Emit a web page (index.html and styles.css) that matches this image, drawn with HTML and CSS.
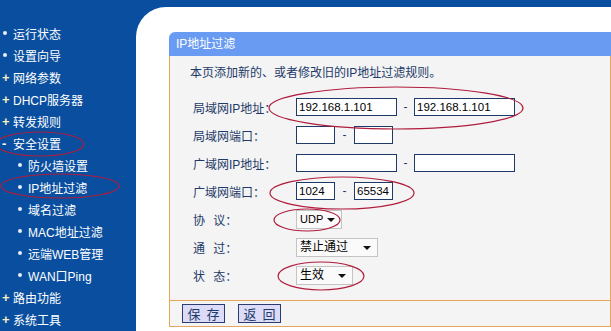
FILE: index.html
```html
<!DOCTYPE html>
<html lang="zh-CN">
<head>
  <meta charset="UTF-8">
  <title>IP地址过滤</title>
  <link rel="stylesheet" href="styles.css">
</head>
<body>
  <div class="page">
    <!-- Left menu -->
    <ul class="menu">
      <li class="item"><span class="mark dot"></span>运行状态</li>
      <li class="item"><span class="mark dot"></span>设置向导</li>
      <li class="item"><span class="mark plus">+</span>网络参数</li>
      <li class="item"><span class="mark plus">+</span>DHCP服务器</li>
      <li class="item"><span class="mark plus">+</span>转发规则</li>
      <li class="item"><span class="mark minus">-</span>安全设置</li>
      <li class="item sub"><span class="mark dot"></span>防火墙设置</li>
      <li class="item sub"><span class="mark dot"></span>IP地址过滤</li>
      <li class="item sub"><span class="mark dot"></span>域名过滤</li>
      <li class="item sub"><span class="mark dot"></span>MAC地址过滤</li>
      <li class="item sub"><span class="mark dot"></span>远端WEB管理</li>
      <li class="item sub"><span class="mark dot"></span>WAN口Ping</li>
      <li class="item"><span class="mark plus">+</span>路由功能</li>
      <li class="item"><span class="mark plus">+</span>系统工具</li>
    </ul>

    <!-- Main area -->
    <div class="main">
      <div class="panel">
        <div class="panel-title">IP地址过滤</div>
        <div class="panel-body">
          <p class="intro">本页添加新的、或者修改旧的IP地址过滤规则。</p>

          <div class="row">
            <span class="label">局域网IP地址：</span>
            <span class="input wide">192.168.1.101</span>
            <span class="dash">-</span>
            <span class="input wide">192.168.1.101</span>
          </div>
          <div class="row">
            <span class="label">局域网端口：</span>
            <span class="input port"></span>
            <span class="dash dash-port">-</span>
            <span class="input port"></span>
          </div>
          <div class="row">
            <span class="label">广域网IP地址：</span>
            <span class="input wide"></span>
            <span class="dash">-</span>
            <span class="input wide"></span>
          </div>
          <div class="row">
            <span class="label">广域网端口：</span>
            <span class="input port">1024</span>
            <span class="dash dash-port">-</span>
            <span class="input port">65534</span>
          </div>
          <div class="row">
            <span class="label spaced">协 议：</span>
            <span class="select sel-proto">UDP<span class="arrow"></span></span>
          </div>
          <div class="row">
            <span class="label spaced">通 过：</span>
            <span class="select sel-pass">禁止通过<span class="arrow"></span></span>
          </div>
          <div class="row">
            <span class="label spaced">状 态：</span>
            <span class="select sel-state">生效<span class="arrow"></span></span>
          </div>
        </div>
        <div class="panel-foot">
          <button class="btn">保 存</button>
          <button class="btn">返 回</button>
        </div>
      </div>
    </div>
  </div>

  <!-- Red annotation circles drawn over the page -->
  <svg class="marks" width="611" height="331" viewBox="0 0 611 331">
    <ellipse cx="40" cy="144" rx="44" ry="12"/>
    <ellipse cx="60" cy="186" rx="59" ry="12"/>
    <ellipse cx="396" cy="108" rx="127" ry="21"/>
    <ellipse cx="342" cy="193" rx="72" ry="16"/>
    <ellipse cx="307" cy="220" rx="33" ry="11"/>
    <ellipse cx="321" cy="276" rx="43" ry="14"/>
  </svg>
</body>
</html>
```

FILE: styles.css
```css
/* Page and blue frame */
body {
  margin: 0;
  background-color: #0a4f9f;
  font-family: "Liberation Sans", "Noto Sans CJK SC", sans-serif;
  font-size: 12px;
  position: relative;
  overflow: hidden;
  height: 331px;
}
.page {
  display: flex;
  height: 331px;
}
/* Left menu */
.menu {
  list-style: none;
  margin: 0;
  padding: 22px 0 0 0;
  width: 136px;
  flex-shrink: 0;
  color: #ffffff;
}
.item {
  display: flex;
  align-items: center;
  height: 22px;
  padding-left: 2px;
}
.item.sub {
  padding-left: 17px;
}
.mark {
  width: 11px;
  display: inline-flex;
  align-items: center;
  justify-content: flex-start;
  font-weight: bold;
  color: #f4f0c0;
}
.mark.dot::before {
  content: "";
  width: 4px;
  height: 4px;
  margin-left: 1px;
  border-radius: 50%;
  background-color: #e8ecf4;
}
.mark.plus {
  font-size: 13px;
}
.mark.minus {
  font-size: 13px;
  color: #ffffff;
}
/* Main white area */
.main {
  flex: 1;
  margin-top: 7px;
  background-color: #ffffff;
  border-top-left-radius: 30px;
  padding: 25px 0 0 33px;
}
.panel {
  display: flex;
  flex-direction: column;
}
.panel-title {
  height: 24px;
  line-height: 24px;
  background-color: #6a9bf2;
  color: #ffffff;
  padding-left: 7px;
  border-top-left-radius: 6px;
}
.panel-body {
  background-color: #f4f4f4;
  border-left: 1px solid #e6a65e;
  border-right: 1px solid #e6a65e;
  padding: 8px 0 11px 20px;
  color: #1d3a68;
}
.intro {
  margin: 0 0 11px;
  line-height: 18px;
}
.row {
  display: flex;
  align-items: center;
  height: 28px;
  padding-left: 3px;
}
.label {
  width: 103px;
  flex-shrink: 0;
}
.label.spaced {
  white-space: pre;
  word-spacing: 5px;
}
.input {
  height: 16px;
  line-height: 16px;
  border: 1px solid #1d3a68;
  background-color: #ffffff;
  color: #000000;
  padding-left: 2px;
  box-sizing: content-box;
  font-size: 11.5px;
}
.input.wide {
  width: 97px;
}
.input.port {
  width: 35px;
}
.dash {
  width: 17px;
  text-align: center;
}
.dash.dash-port {
  width: 19px;
}
/* Drop-down boxes */
.select {
  position: relative;
  height: 17px;
  line-height: 17px;
  border: 1px solid #c4c4c4;
  background-color: #fafafa;
  color: #000000;
  padding-left: 3px;
}
.sel-proto {
  width: 41px;
  font-size: 11px;
}
.sel-pass {
  width: 77px;
}
.sel-state {
  width: 52px;
}
.arrow {
  position: absolute;
  right: 6px;
  top: 7px;
  border-left: 4px solid transparent;
  border-right: 4px solid transparent;
  border-top: 4px solid #111111;
}
/* Footer with buttons */
.panel-foot {
  display: flex;
  gap: 13px;
  align-items: center;
  height: 25px;
  padding-left: 12px;
  background-color: #f4f4f4;
  border: 1px solid #e6a65e;
}
.btn {
  height: 19px;
  width: 43px;
  padding: 0;
  font-family: "Noto Sans CJK SC", sans-serif;
  font-size: 13px;
  line-height: 17px;
  white-space: pre;
  word-spacing: 3px;
  color: #1d3a68;
  background-color: #dcdcf8;
  border: 1px solid #2a3c70;
}
/* Red annotations */
.marks {
  position: absolute;
  left: 0;
  top: 0;
  pointer-events: none;
}
.marks ellipse {
  fill: none;
  stroke: #b01c3c;
  stroke-width: 1.2;
}
```
